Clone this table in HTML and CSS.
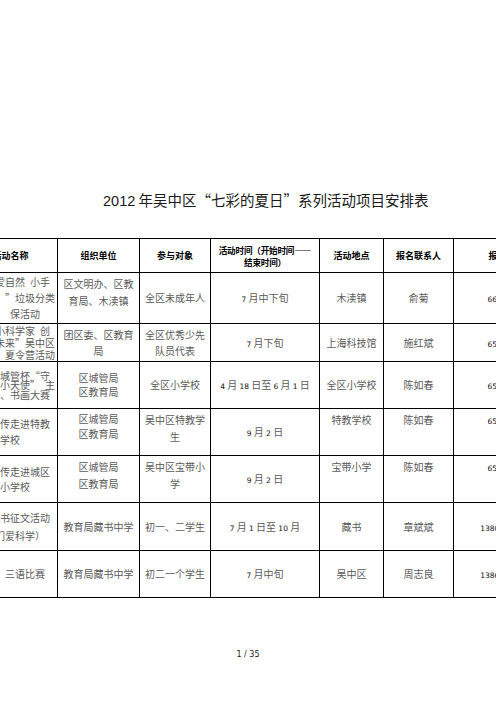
FILE: index.html
```html
<!DOCTYPE html>
<html lang="zh-CN">
<head>
<meta charset="utf-8">
<title>2012年吴中区“七彩的夏日”系列活动项目安排表</title>
<link rel="stylesheet" href="styles.css">
</head>
<body>
<div class="page">
  <h1 class="title"><span class="tn">2012</span> 年吴中区“七彩的夏日”系列活动项目安排表</h1>
  <table class="sched">
    <colgroup>
      <col class="c1"><col class="c2"><col class="c3"><col class="c4"><col class="c5"><col class="c6"><col class="c7">
    </colgroup>
    <thead>
      <tr class="rh">
        <th>活动名称</th>
        <th>组织单位</th>
        <th>参与对象</th>
        <th class="wide">活动时间（开始时间——<br>结束时间）</th>
        <th>活动地点</th>
        <th>报名联系人</th>
        <th>报名电话</th>
      </tr>
    </thead>
    <tbody>
      <tr class="r1">
        <td class="name lh16">爱自然&ensp;小手<br>　”垃圾分类<br>　&ensp;保活动</td>
        <td class="top">区文明办、区教育局、木渎镇</td>
        <td>全区未成年人</td>
        <td><span class="n">7</span> 月中下旬</td>
        <td>木渎镇</td>
        <td>俞菊</td>
        <td><span class="n">66516318</span></td>
      </tr>
      <tr class="r2">
        <td class="name lh12">小科学家&ensp;创<br>未来”吴中区<br>　夏令营活动</td>
        <td class="lh16">团区委、区教育局</td>
        <td class="lh16">全区优秀少先队员代表</td>
        <td><span class="n">7</span> 月下旬</td>
        <td>上海科技馆</td>
        <td>施红斌</td>
        <td><span class="n">65102766</span></td>
      </tr>
      <tr class="r3">
        <td class="name lh9">&ensp;城管杯“守<br>&ensp;小天使”&ensp;主<br>&ensp;、书画大赛</td>
        <td class="lh14">区城管局<br>区教育局</td>
        <td>全区小学校</td>
        <td><span class="n">4</span> 月 <span class="n">18</span> 日至 <span class="n">6</span> 月 <span class="n">1</span> 日</td>
        <td>全区小学校</td>
        <td>陈如春</td>
        <td><span class="n">65237213</span></td>
      </tr>
      <tr class="r4">
        <td class="name lh16">&ensp;传走进特教<br>&ensp;学校</td>
        <td class="top lh15">区城管局<br>区教育局</td>
        <td class="top">吴中区特教学生</td>
        <td><span class="n">9</span> 月 <span class="n">2</span> 日</td>
        <td class="top">特教学校</td>
        <td class="top">陈如春</td>
        <td class="top"><span class="n">65237213</span></td>
      </tr>
      <tr class="r5">
        <td class="name lh15">&ensp;传走进城区<br>&ensp;小学校</td>
        <td class="top">区城管局<br>区教育局</td>
        <td class="top">吴中区宝带小学</td>
        <td><span class="n">9</span> 月 <span class="n">2</span> 日</td>
        <td class="top">宝带小学</td>
        <td class="top">陈如春</td>
        <td class="top"><span class="n">65237213</span></td>
      </tr>
      <tr class="r6">
        <td class="name lh18">&ensp;书征文活动<br>们爱科学）</td>
        <td>教育局藏书中学</td>
        <td>初一、二学生</td>
        <td><span class="n">7</span> 月 <span class="n">1</span> 日至 <span class="n">10</span> 月</td>
        <td>藏书</td>
        <td>章斌斌</td>
        <td><span class="n">13806211234</span></td>
      </tr>
      <tr class="r7">
        <td class="name">　三语比赛</td>
        <td>教育局藏书中学</td>
        <td>初二一个学生</td>
        <td><span class="n">7</span> 月中旬</td>
        <td>吴中区</td>
        <td>周志良</td>
        <td><span class="n">13862567890</span></td>
      </tr>
    </tbody>
  </table>
  <div class="pager">1 / 35</div>
</div>
</body>
</html>
```
FILE: styles.css
```css
html, body {
  margin: 0;
  padding: 0;
  overflow: hidden;
  background: #fff;
}
body {
  width: 496px;
  height: 702px;
  font-family: "Noto Sans CJK SC", sans-serif;
  color: #5a5a5a;
}
.page {
  width: 496px;
}
.title {
  margin: 0;
  padding: 190px 0 0 103px;
  font-size: 14.5px;
  line-height: 20px;
  font-weight: normal;
  color: #1a1a1a;
  white-space: nowrap;
}
.title .tn {
  font-family: "Liberation Sans", sans-serif;
}
.sched {
  margin: 27px 0 0 -37px;
  border-collapse: collapse;
  table-layout: fixed;
  width: 596px;
}
.c1 { width: 94px; }
.c2 { width: 82px; }
.c3 { width: 71px; }
.c4 { width: 109px; }
.c5 { width: 64px; }
.c6 { width: 70px; }
.c7 { width: 106px; }
.sched th,
.sched td {
  border: 1px solid #000;
  padding: 0 5px;
  text-align: center;
  vertical-align: middle;
  font-size: 10px;
  line-height: 16px;
  font-weight: normal;
}
.sched th {
  font-weight: bold;
  font-size: 9px;
  line-height: 12px;
  color: #000;
  white-space: nowrap;
}
.sched th.wide {
  padding: 0;
  font-size: 8.6px;
  letter-spacing: -0.2px;
}
.rh { height: 34px; }
.r1 { height: 51px; }
.r2 { height: 38px; }
.r3 { height: 47px; }
.r4 { height: 47px; }
.r5 { height: 47px; }
.r6 { height: 48px; }
.r7 { height: 47px; }
.sched td.name {
  text-align: left;
  padding: 0 0 0 31px;
  white-space: nowrap;
  overflow: hidden;
}
.sched td.top {
  vertical-align: top;
  padding-top: 2px;
  line-height: 17px;
}
.sched td.lh9 { line-height: 9.5px; }
.sched td.lh12 { line-height: 12px; }
.sched td.lh14 { line-height: 14px; }
.sched td.lh15 { line-height: 15px; }
.sched td.lh16 { line-height: 16px; }
.sched td.lh18 { line-height: 18px; }
.n {
  font-family: "DejaVu Sans", sans-serif;
  font-size: 7.5px;
  line-height: 1;
  color: #111;
}
.pager {
  margin-top: 52px;
  text-align: center;
  font-family: "DejaVu Sans", sans-serif;
  font-size: 8px;
  line-height: 10px;
  color: #222;
}
```
